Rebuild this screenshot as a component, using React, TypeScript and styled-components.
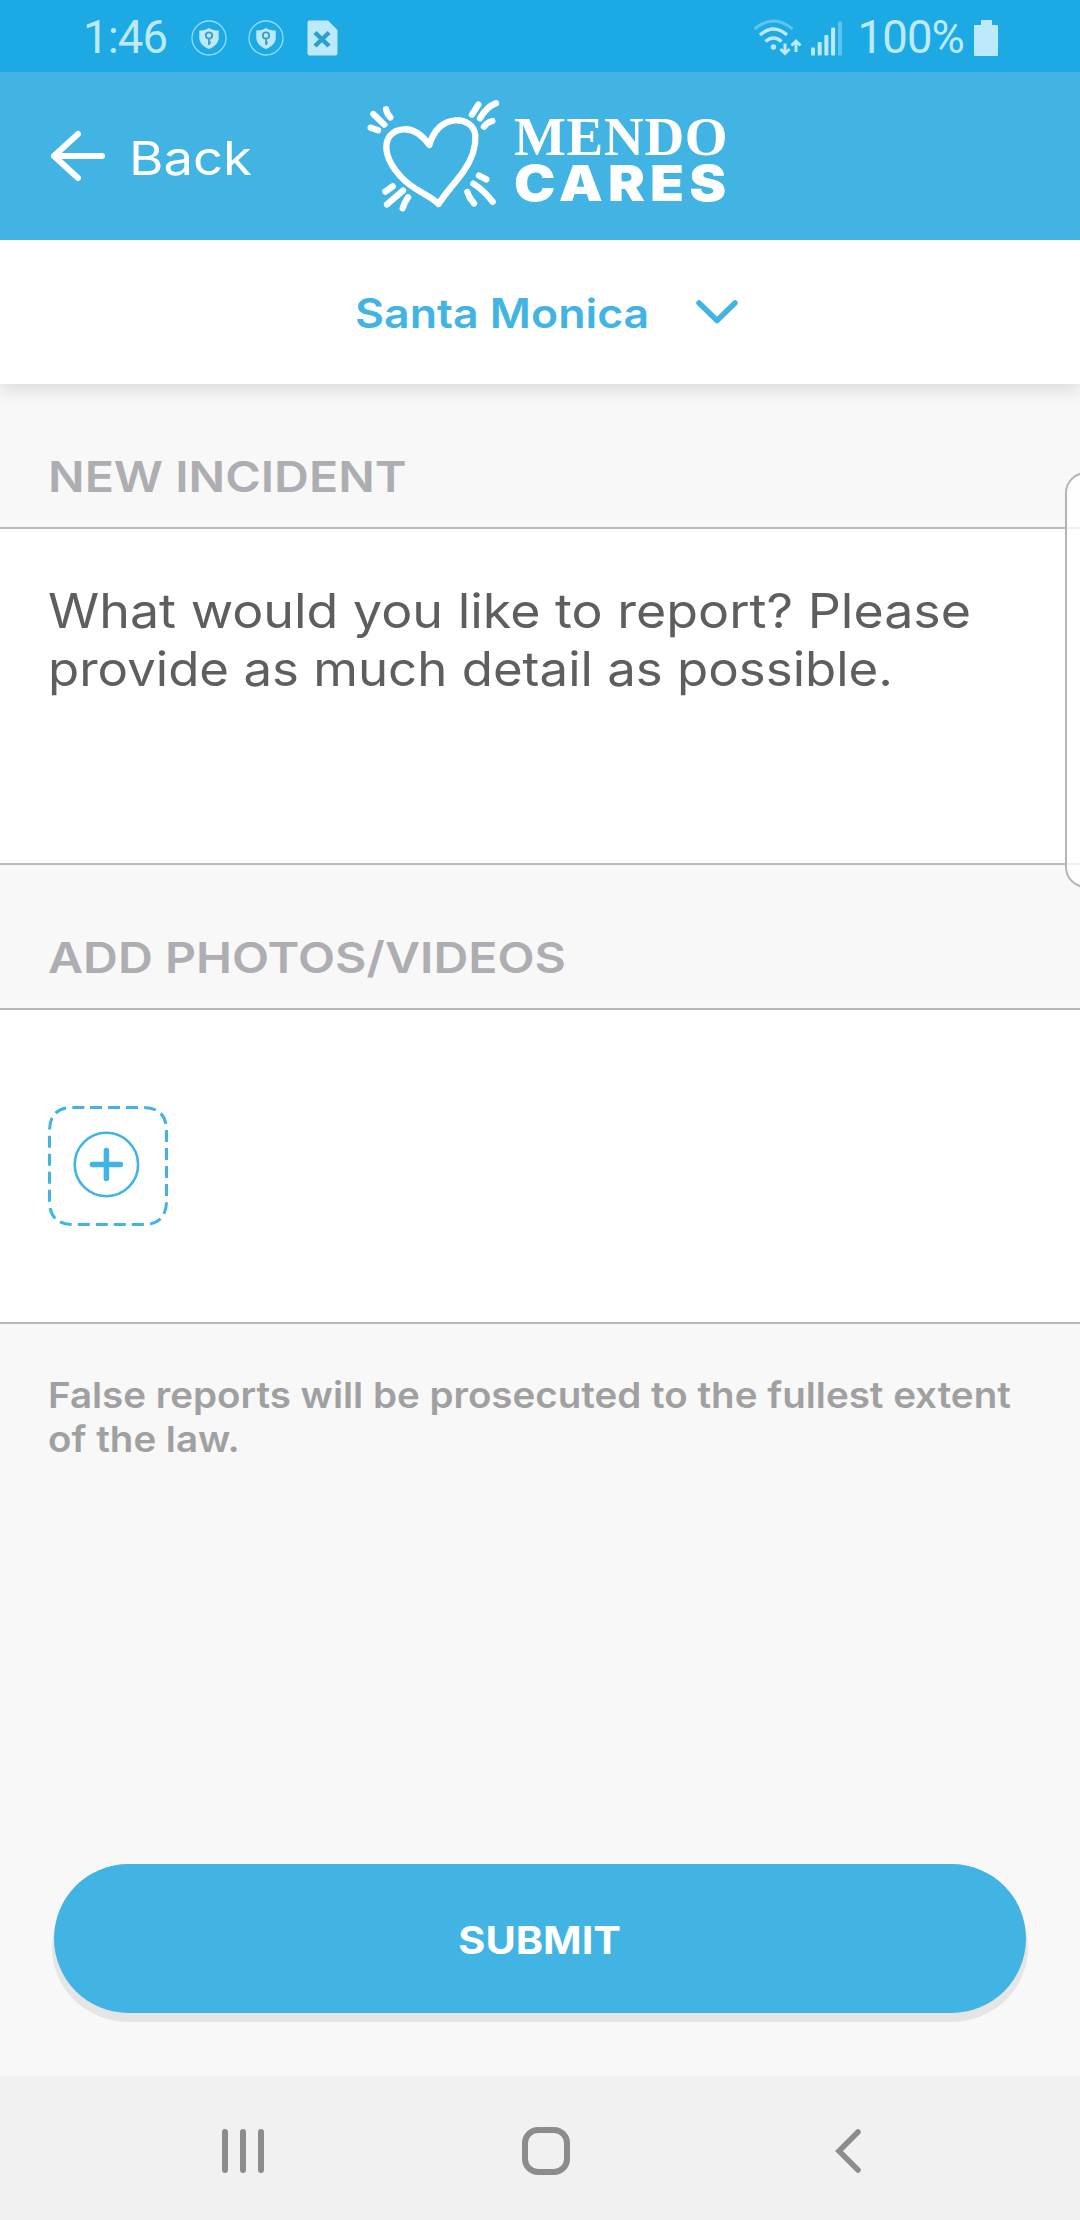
import React from "react";
import styled, { createGlobalStyle } from "styled-components";

const BLUE = "#41b4e4";
const PALE = "#bdeafb";

const GlobalStyle = createGlobalStyle`
  * { box-sizing: border-box; }
  html, body { margin: 0; padding: 0; background: #f8f8f8; }
  body { font-family: Inter, "Open Sans", sans-serif; }
`;

const Screen = styled.div`
  position: relative;
  width: 1080px;
  height: 2220px;
  display: flex;
  flex-direction: column;
  overflow: hidden;
  background: #f8f8f8;
`;

const StatusBar = styled.header`
  flex: none;
  height: 72px;
  padding: 4px 82px 0 83px;
  display: flex;
  align-items: center;
  justify-content: space-between;
  background: #1ca9e4;
  color: ${PALE};
`;

const StatusGroup = styled.div`
  display: flex;
  align-items: center;
`;

const StatusText = styled.span<{ $gap: number }>`
  font: 400 45.5px/52px Roboto, sans-serif;
  letter-spacing: -0.9px;
  margin-right: ${(p) => p.$gap}px;
`;

const Icon = styled.svg<{ $right?: number }>`
  display: block;
  flex: none;
  margin-right: ${(p) => p.$right ?? 0}px;
`;

const Wide = styled.span<{ $stretch: number }>`
  display: block;
  width: max-content;
  white-space: nowrap;
  transform: scaleX(${(p) => p.$stretch});
  transform-origin: 0 50%;
`;

const TopBar = styled.div`
  flex: none;
  position: relative;
  z-index: 2;
  height: 168px;
  padding: 0 0 0 50px;
  display: flex;
  align-items: center;
  background: ${BLUE};
  color: #fff;
`;

const BackButton = styled.button`
  width: 315px;
  padding: 0;
  border: 0;
  background: none;
  color: inherit;
  display: flex;
  align-items: center;
  gap: 23px;
`;

const BackLabel = styled(Wide)`
  font: 400 47px/56px Inter, sans-serif;
  margin-top: 4px;
`;

const Brand = styled.div`
  display: flex;
  align-items: center;
  gap: 9px;
`;

const Wordmark = styled.div`
  display: flex;
  flex-direction: column;
  padding-top: 7px;
`;

const MendoLine = styled.span`
  font: 700 55px/46px "Liberation Serif", serif;
  letter-spacing: 0.7px;
`;

const CaresLine = styled(Wide)`
  font: 900 49.5px/46px Inter, sans-serif;
  letter-spacing: 4.6px;
`;

const LocationPicker = styled.button`
  flex: none;
  position: relative;
  z-index: 1;
  height: 144px;
  padding: 0 0 0 355px;
  border: 0;
  display: flex;
  align-items: center;
  background: #fff;
  color: ${BLUE};
  box-shadow: 0 8px 16px rgba(0, 0, 0, 0.1);
`;

const LocationName = styled.span`
  width: 341px;
  padding-top: 3px;
  text-align: left;
  font: 600 40.5px/48px Inter, sans-serif;
`;

const SectionHeading = styled.h2`
  flex: none;
  height: 143px;
  margin: 0;
  padding: 66px 48px 0;
  color: #adadb2;
  font: 600 43px/52px Inter, sans-serif;
`;

const Panel = styled.section<{ $height: number }>`
  flex: none;
  height: ${(p) => p.$height}px;
  border-top: 2px solid #b8b8b8;
  border-bottom: 2px solid #b8b8b8;
  background: #fff;
`;

const Prompt = styled.p`
  margin: 0;
  padding: 53px 48px 0;
  color: #5e5e5e;
  font: 400 47.7px/58px Inter, sans-serif;
`;

const Disclaimer = styled.p`
  margin: 0;
  padding: 49px 48px 0;
  color: #a0a0a0;
  font: 600 36px/44px Inter, sans-serif;
`;

const AddButton = styled.button`
  display: block;
  margin: 96px 0 0 48px;
  padding: 0;
  border: 0;
  background: none;
`;

const SubmitButton = styled.button`
  flex: none;
  width: 972px;
  height: 149px;
  margin: auto auto 63px;
  padding: 3px 0 0;
  border: 0;
  border-radius: 75px;
  display: flex;
  align-items: center;
  justify-content: center;
  background: ${BLUE};
  color: #fff;
  font: 700 38px/46px Inter, sans-serif;
  box-shadow: 3px 9px 0 -1px #e5e5e5, -3px 9px 0 -1px #e5e5e5, 0 9px 0 #e5e5e5;
`;

const SubmitLabel = styled(Wide)`
  transform-origin: 50% 50%;
`;

const NavBar = styled.nav`
  flex: none;
  height: 144px;
  padding: 6px 218px 0 221px;
  display: flex;
  align-items: center;
  justify-content: space-between;
  background: #f1f1f1;
`;

const EdgePanel = styled.div`
  position: absolute;
  z-index: 2;
  top: 472px;
  right: -30px;
  width: 45px;
  height: 416px;
  border: 2px solid #b4b4b4;
  border-radius: 21px;
  background: rgba(255, 255, 255, 0.8);
`;

const ShieldIcon = ({ right }: { right: number }) => (
  <Icon $right={right} width="36" height="36" viewBox="0 0 36 36" fill="none">
    <circle cx="18" cy="18" r="17" stroke="#8fdcf8" strokeWidth="1.3" />
    <path d="M18 8C15 10 12 10.500 8.300 10.500V18C8.300 23 13 27 18 29C23 27 27.700 23 27.700 18V10.500C24 10.500 21 10 18 8Z" fill={PALE} />
    <circle cx="18" cy="15.500" r="3.200" stroke="#3b9cc6" strokeWidth="1.800" />
    <path d="M18 18.500V25M18 22.500H19.800" stroke="#3b9cc6" strokeWidth="1.800" />
  </Icon>
);

export default function App() {
  return (
    <Screen>
      <GlobalStyle />
      <StatusBar>
        <StatusGroup>
          <StatusText $gap={24}>1:46</StatusText>
          <ShieldIcon right={21} />
          <ShieldIcon right={23} />
          <Icon width="31" height="36" viewBox="0 0 31 36">
            <path d="M2 0.500H21L30.500 10V33.500Q30.500 35.500 28.500 35.500H2.500Q0.500 35.500 0.500 33.500V2.500Q0.500 0.500 2 0.500Z" fill={PALE} />
            <path d="M8 12.500L22 26M22 12.500L8 26" stroke="#2ba0d0" strokeWidth="4.500" />
          </Icon>
        </StatusGroup>
        <StatusGroup>
          <Icon $right={9} width="49" height="38" viewBox="0 0 49 38" fill="none" stroke={PALE} strokeWidth="3">
            <path d="M1.500 10Q20.500 -6 39.500 10" stroke="#5cc5ef" />
            <path d="M7 16Q20.500 4 34 16" strokeWidth="3.500" />
            <path d="M12.500 22.500Q20.500 15.500 28.500 22.500" strokeWidth="3.500" />
            <circle cx="20.500" cy="28" r="2.700" fill={PALE} stroke="none" />
            <path d="M32 24.500V34M27.500 30L32 34.500L36.500 30M43 33V23M38.500 26.500L43 22L47.500 26.500" />
          </Icon>
          <Icon $right={16} width="31" height="36" viewBox="0 0 31 36" fill={PALE}>
            <rect x="0" y="27.500" width="4" height="8" rx="1" />
            <rect x="6.700" y="22" width="4" height="13.500" rx="1" />
            <rect x="13.400" y="15" width="4" height="20.500" rx="1" />
            <rect x="20.100" y="7.500" width="4" height="28" rx="1" />
            <rect x="27" y="1.500" width="4" height="34" rx="1" fill="#5cc5ef" />
          </Icon>
          <StatusText $gap={10}>100%</StatusText>
          <Icon width="24" height="36" viewBox="0 0 24 36" fill={PALE}>
            <path d="M7 0H18V5H23Q24 5 24 6V35Q24 36 23 36H1Q0 36 0 35V6Q0 5 1 5H7Z" />
          </Icon>
        </StatusGroup>
      </StatusBar>

      <TopBar>
        <BackButton>
          <Icon width="56" height="52" viewBox="0 0 56 52" fill="none" stroke="#fff" strokeWidth="6" strokeLinecap="round" strokeLinejoin="round">
            <path d="M52 26H4M28 4L4 26L28 48" />
          </Icon>
          <BackLabel $stretch={1.12}>Back</BackLabel>
        </BackButton>
        <Brand>
          <Icon width="140" height="120" viewBox="75 48 420 360" fill="none" stroke="#fff" strokeWidth="19" strokeLinecap="round" strokeLinejoin="round">
            <path d="M268 195C250 170 225 145 190 148C155 150 138 175 139 205C141 250 185 300 225 325C260 347 280 355 296 372C315 340 345 310 370 275C395 240 408 200 406 165C402 135 375 119 345 121C305 125 280 155 268 195Z" />
            <path d="M100 102L133 134M138 88Q142 104 151 112M92 143L114 151" />
            <path d="M415 74L396 104M468 70Q440 80 420 115M457 123Q441 127 432 140" />
            <path d="M158 319L136 335M189 332L141 373M204 352Q192 368 188 385" />
            <path d="M417 287L439 298M400 311Q430 330 458 365M382 336Q388 355 402 370" />
          </Icon>
          <Wordmark>
            <MendoLine>MENDO</MendoLine>
            <CaresLine $stretch={1.12}>CARES</CaresLine>
          </Wordmark>
        </Brand>
      </TopBar>

      <LocationPicker>
        <LocationName>
          <Wide $stretch={1.102}>Santa Monica</Wide>
        </LocationName>
        <Icon width="42" height="24" viewBox="0 0 42 24" fill="none" stroke={BLUE} strokeWidth="5.500" strokeLinecap="round" strokeLinejoin="round">
          <path d="M3 3L21 20.500L39 3" />
        </Icon>
      </LocationPicker>

      <SectionHeading>
        <Wide $stretch={1.122}>NEW INCIDENT</Wide>
      </SectionHeading>
      <Panel $height={338}>
        <Prompt>
          <Wide $stretch={1.089}>What would you like to report? Please</Wide>
          <Wide $stretch={1.069}>provide as much detail as possible.</Wide>
        </Prompt>
      </Panel>

      <SectionHeading>
        <Wide $stretch={1.122}>ADD PHOTOS/VIDEOS</Wide>
      </SectionHeading>
      <Panel $height={316}>
        <AddButton aria-label="Add">
          <Icon width="120" height="120" viewBox="0 0 120 120" fill="none" stroke={BLUE}>
            <path d="M42 1.500H95Q118.500 1.500 118.500 25V95Q118.500 118.500 95 118.500H25Q1.500 118.500 1.500 95V25Q1.500 1.500 25 1.500Z" strokeWidth="3" strokeDasharray="12 6" />
            <circle cx="58.400" cy="58.500" r="31.700" strokeWidth="2.600" />
            <path d="M58.400 44.500V72.500M44.400 58.500H72.400" strokeWidth="5.500" strokeLinecap="round" />
          </Icon>
        </AddButton>
      </Panel>

      <Disclaimer>
        <Wide $stretch={1.07}>False reports will be prosecuted to the fullest extent</Wide>
        <Wide $stretch={1.07}>of the law.</Wide>
      </Disclaimer>

      <SubmitButton>
        <SubmitLabel $stretch={1.09}>SUBMIT</SubmitLabel>
      </SubmitButton>

      <NavBar>
        <Icon width="44" height="46" viewBox="0 0 44 46" stroke="#8c8c8c" strokeWidth="6" strokeLinecap="round">
          <path d="M4 4V42M22 4V42M40 4V42" />
        </Icon>
        <Icon $right={8} width="48" height="48" viewBox="0 0 48 48" fill="none" stroke="#8c8c8c" strokeWidth="6">
          <rect x="3" y="3" width="42" height="42" rx="13" />
        </Icon>
        <Icon width="28" height="46" viewBox="0 0 28 46" fill="none" stroke="#8c8c8c" strokeWidth="5.500" strokeLinecap="round">
          <path d="M24 4L5 23L24 42" />
        </Icon>
      </NavBar>

      <EdgePanel />
    </Screen>
  );
}
